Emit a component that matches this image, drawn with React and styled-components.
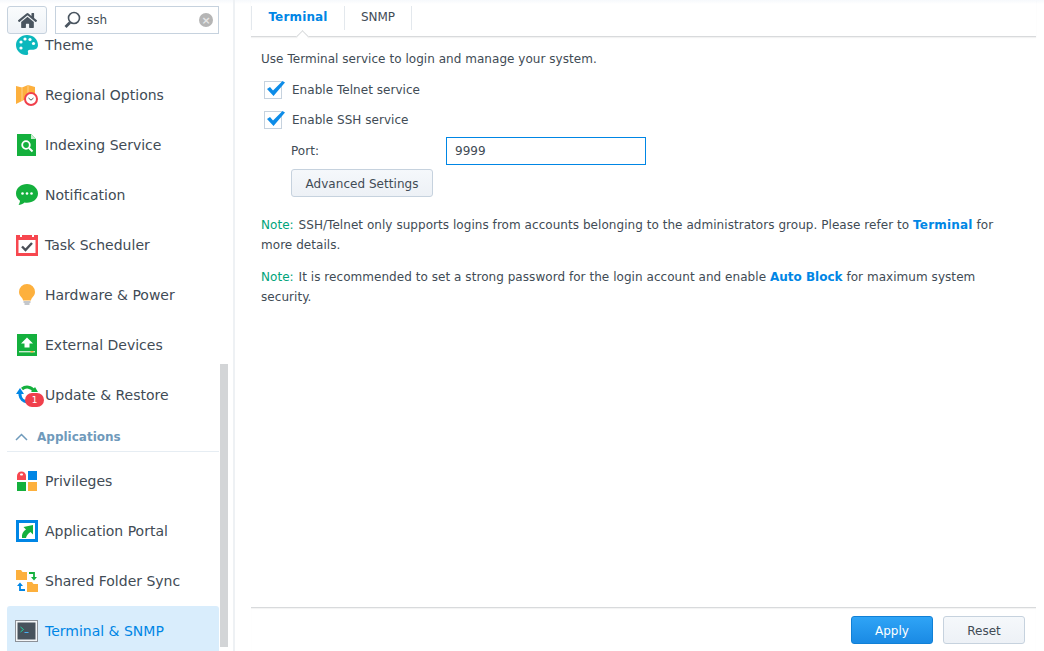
import React from "react";
import styled, { createGlobalStyle } from "styled-components";
import { FaHome } from "react-icons/fa";

const Global = createGlobalStyle`
  html, body {
    margin: 0;
    padding: 0;
    height: 100%;
    overflow: hidden;
    background: #fff;
  }
  body {
    font-family: "DejaVu Sans", Verdana, sans-serif;
    font-size: 12px;
    color: #414b55;
  }
  * { box-sizing: border-box; }
`;

const Page = styled.div`
  display: flex;
  width: 1044px;
  height: 651px;
  background: linear-gradient(#f6f9fc, #fff 4px);
  overflow: hidden;
`;

const Sidebar = styled.aside`
  position: relative;
  width: 235px;
  height: 651px;
  flex: none;
  border-right: 2px solid #eef1f4;
  overflow: hidden;
`;

const Toolbar = styled.div`
  position: absolute;
  top: 0;
  left: 0;
  width: 233px;
  height: 35px;
  padding: 6px 0 0 7px;
  display: flex;
  gap: 8px;
  background: linear-gradient(#f6f9fc, #fff 4px);
  z-index: 2;
`;

const HomeButton = styled.button`
  width: 40px;
  height: 28px;
  padding: 0;
  display: flex;
  align-items: center;
  justify-content: center;
  border: 1px solid #c6d2de;
  border-radius: 3px;
  background: linear-gradient(#fafcfd, #eef2f7);
  color: #4a5560;
  font-size: 19px;
`;

const Search = styled.div`
  width: 164px;
  height: 28px;
  padding: 0 5px 0 8px;
  display: flex;
  align-items: center;
  gap: 6px;
  border: 1px solid #c6d2de;
  background: #fff;
`;

const SearchText = styled.span`
  flex: 1;
  font-size: 12px;
  color: #414b55;
`;

const ClearDot = styled.span`
  width: 14px;
  height: 14px;
  border-radius: 50%;
  background: #b5b5b5;
  color: #e6e6e6;
  display: flex;
  align-items: center;
  justify-content: center;
  font-size: 11px;
  font-weight: bold;
  line-height: 1;
`;

const ScrollThumb = styled.div`
  position: absolute;
  top: 364px;
  left: 220px;
  width: 8px;
  height: 283px;
  background: #d3d5d7;
`;

const List = styled.div`
  padding: 20px 0 0 7px;
  width: 219px;
  display: flex;
  flex-direction: column;
`;

const Row = styled.div`
  height: 50px;
  padding-left: 9px;
  display: flex;
  align-items: center;
  gap: 7px;
  border-radius: 3px;
  font-size: 14px;
  color: ${(p) => (p.$active ? "#0086e5" : "#414b55")};
  background: ${(p) =>
    p.$active ? "linear-gradient(#d9edfc 92%, #eef7fe)" : "transparent"};
`;

const IconSlot = styled.span`
  position: relative;
  width: 22px;
  height: 22px;
  flex: none;
  display: block;
  svg { display: block; }
`;

const Badge = styled.span`
  position: absolute;
  left: 9px;
  top: 9px;
  width: 19px;
  height: 14px;
  border-radius: 7px;
  background: #f0404c;
  color: #fff;
  font-size: 9px;
  line-height: 14px;
  text-align: center;
`;

const Section = styled.div`
  height: 32px;
  margin-bottom: 4px;
  padding: 2px 0 0 8px;
  display: flex;
  align-items: center;
  gap: 9px;
  font-size: 12px;
  font-weight: bold;
  color: #6f9abb;
  border-bottom: 1px solid #e6edf3;
`;

const Main = styled.main`
  flex: 1;
  display: flex;
  flex-direction: column;
  padding: 0 8px 0 16px;
  min-width: 0;
`;

const Tabs = styled.div`
  position: relative;
  height: 37px;
  padding-top: 6px;
  display: flex;
  align-items: flex-start;
  border-bottom: 1px solid #d8dadc;
  box-shadow: 0 1px 1px rgba(0, 0, 0, 0.05);
`;

const Tab = styled.div`
  position: relative;
  height: 24px;
  width: ${(p) => p.$w}px;
  line-height: 23px;
  text-align: center;
  font-size: 12px;
  font-weight: ${(p) => (p.$active ? "bold" : "normal")};
  letter-spacing: ${(p) => (p.$active ? "0.15px" : "0")};
  color: ${(p) => (p.$active ? "#0086e5" : "#414b55")};
  border-left: ${(p) => (p.$first ? "1px solid #e3e8ed" : "none")};
  border-right: 1px solid #e3e8ed;
`;

const TabNotch = styled.span`
  position: absolute;
  left: 47px;
  top: 32px;
  width: 9px;
  height: 9px;
  transform: rotate(45deg);
  background: #fff;
  border-left: 1px solid #d8dadc;
  border-top: 1px solid #d8dadc;
`;

const Content = styled.div`
  flex: 1;
  padding: 13px 0 0 10px;
  font-size: 12px;
  letter-spacing: 0.04px;
`;

const Intro = styled.p`
  margin: 0;
  line-height: 18px;
`;

const CheckRow = styled.label`
  display: flex;
  align-items: center;
  gap: 10px;
  height: 30px;
  padding-left: 3px;
  &:first-of-type { margin-top: 7px; }
`;

const CheckBox = styled.span`
  position: relative;
  width: 18px;
  height: 18px;
  border: 1px solid #c6d2de;
  background: #fff;
  svg {
    position: absolute;
    left: 2px;
    top: -1px;
  }
`;

const PortRow = styled.div`
  display: flex;
  align-items: center;
  margin: 2px 0 0 30px;
  height: 28px;
`;

const PortLabel = styled.span`
  width: 155px;
`;

const PortInput = styled.div`
  width: 200px;
  height: 28px;
  padding-left: 8px;
  line-height: 26px;
  border: 1px solid #0086e5;
`;

const Button = styled.button`
  display: block;
  font-family: inherit;
  font-size: 12px;
  letter-spacing: inherit;
  color: #414b55;
  height: 28px;
  width: ${(p) => p.$w}px;
  padding: 1px 0 0;
  border: 1px solid ${(p) => (p.$primary ? "#1180d6" : "#c6d2de")};
  border-radius: 3px;
  background: ${(p) =>
    p.$primary ? "linear-gradient(#2fa4f6, #1a8ae4)" : "linear-gradient(#f5f8fb, #edf1f6)"};
  ${(p) => p.$primary && "color: #fff;"}
`;

const AdvancedButton = styled(Button)`
  margin: 4px 0 0 30px;
`;

const Note = styled.p`
  margin: ${(p) => p.$top}px 0 0;
  line-height: 20px;
  width: 740px;
  letter-spacing: 0.05px;
`;

const NoteTag = styled.span`
  color: #00a47a;
  margin-right: 1px;
`;

const NoteLink = styled.a`
  color: #0086e5;
  font-weight: bold;
  letter-spacing: ${(p) => p.$spacing}px;
`;

const Footer = styled.div`
  height: 44px;
  padding: 8px 11px 0 0;
  display: flex;
  justify-content: flex-end;
  gap: 10px;
  border-top: 1px solid #d8dadc;
  box-shadow: inset 0 1px 1px rgba(0, 0, 0, 0.05);
`;

const ThemeIcon = () => (
  <svg width="22" height="22" viewBox="0 0 22 22">
    <path d="M11 1C5 1 0 5.500 0 11s4.500 10 10 10c2 0 2.600-1.200 2-2.600-.6-1.500.3-2.700 2-2.700h3.500c2.500 0 4.500-1.700 4.500-4.400C22 5 17 1 11 1z" fill="#0cb8bd" />
    <circle cx="5" cy="8" r="1.600" fill="#fff" />
    <circle cx="9" cy="5" r="1.600" fill="#fff" />
    <circle cx="14" cy="5.500" r="1.600" fill="#fff" />
    <circle cx="17.500" cy="9.500" r="1.600" fill="#fff" />
    <circle cx="5" cy="14" r="1.600" fill="#fff" />
  </svg>
);

const RegionalIcon = () => (
  <svg width="22" height="22" viewBox="0 0 22 22">
    <path d="M0 2l6 1.500L12 1l7 2v10l-7 1-6 3-6 3z" fill="#fdb03d" />
    <path d="M6 3.500V17M12 1v13" stroke="#ffd28a" strokeWidth="1" />
    <circle cx="15" cy="15" r="6" fill="#fff" stroke="#f0404c" strokeWidth="2" />
    <path d="M12.500 14l2.500 2.200 2.500-2.200" fill="none" stroke="#555" strokeWidth="1" />
  </svg>
);

const IndexIcon = () => (
  <svg width="22" height="22" viewBox="0 0 22 22">
    <path d="M1 0h14l5 5v17H1z" fill="#14b03d" />
    <path d="M15 0l5 5h-5z" fill="#c8eccf" />
    <circle cx="10" cy="11" r="3.800" fill="none" stroke="#fff" strokeWidth="1.800" />
    <path d="M13 14l3.500 3.500" stroke="#fff" strokeWidth="2" />
  </svg>
);

const NotificationIcon = () => (
  <svg width="22" height="22" viewBox="0 0 22 22">
    <path d="M11 0C5 0 0 4 0 9.500c0 3 1.500 5.500 4 7.200-.1 1.600-.8 3.300-1.500 4.300 2 0 4.500-1 6-2.500 1 .2 1.700.3 2.500.3 6 0 11-4 11-9.300S17 0 11 0z" fill="#14b03d" />
    <circle cx="6.500" cy="9.500" r="1.300" fill="#fff" />
    <circle cx="11" cy="9.500" r="1.300" fill="#fff" />
    <circle cx="15.500" cy="9.500" r="1.300" fill="#fff" />
  </svg>
);

const TaskIcon = () => (
  <svg width="22" height="22" viewBox="0 0 22 22">
    <rect x="0" y="1" width="22" height="21" fill="#f7474f" />
    <rect x="2.500" y="6" width="17" height="13" fill="#fff" />
    <rect x="4" y="0" width="2" height="3" fill="#fff" />
    <rect x="16" y="0" width="2" height="3" fill="#fff" />
    <path d="M6 12.500l3.500 3.500L16 9" fill="none" stroke="#4a4f57" strokeWidth="2.400" />
  </svg>
);

const BulbIcon = () => (
  <svg width="22" height="22" viewBox="0 0 22 22">
    <path d="M11 0a8 8 0 0 0-8 8c0 3 1.700 4.500 3 6 .8.900 1 2 1 2.500h8c0-.5.2-1.600 1-2.500 1.300-1.500 3-3 3-6a8 8 0 0 0-8-8z" fill="#fdb03d" />
    <path d="M7.500 18h7M8.500 20h5" stroke="#8a9097" strokeWidth="1.200" />
  </svg>
);

const ExternalIcon = () => (
  <svg width="22" height="22" viewBox="0 0 22 22">
    <rect x="1" y="0" width="20" height="22" fill="#14b03d" />
    <path d="M11 3.500l6 6h-3.500v4h-5v-4H5z" fill="#fff" />
    <rect x="3" y="17" width="16" height="1.400" fill="#c8eccf" />
    <rect x="14.500" y="17" width="3" height="1.400" fill="#fdb03d" />
  </svg>
);

const UpdateIcon = () => (
  <svg width="22" height="22" viewBox="0 0 22 22">
    <path d="M6 5a8 8 0 0 1 12 2" fill="none" stroke="#14b03d" strokeWidth="3" />
    <path d="M15 8h7l-3-5z" fill="#14b03d" />
    <path d="M4 9v2a8 8 0 0 0 7 7" fill="none" stroke="#0086e5" strokeWidth="3" />
    <path d="M0 10h8L4 4z" fill="#0086e5" />
  </svg>
);

const PrivilegesIcon = () => (
  <svg width="22" height="22" viewBox="0 0 22 22">
    <path d="M1 10V6a4.500 4.500 0 0 1 9 0v4z" fill="#f7474f" />
    <rect x="4" y="3.500" width="3" height="2" rx="1" fill="#fff" />
    <rect x="12" y="1" width="9" height="9" fill="#0086e5" />
    <rect x="1" y="12" width="9" height="9" fill="#14b03d" />
    <rect x="12" y="12" width="9" height="9" fill="#fdb03d" />
  </svg>
);

const PortalIcon = () => (
  <svg width="22" height="22" viewBox="0 0 22 22">
    <rect x="0" y="0" width="22" height="22" fill="#0086e5" />
    <rect x="3" y="3" width="16" height="16" fill="#fff" />
    <path d="M6 18c-.5-4 1-6.500 4-8.500L7.500 7l9.500-2v9.500l-2.500-2.500c-2.500 1.500-4 3.500-4.500 6z" fill="#14b03d" />
  </svg>
);

const SyncIcon = () => (
  <svg width="22" height="22" viewBox="0 0 22 22">
    <path d="M0 0h5l1.500 2H11v8H0z" fill="#fdb03d" />
    <path d="M11 12h5l1.500 2H22v8H11z" fill="#fdb03d" />
    <path d="M13 3h5v4" fill="none" stroke="#14b03d" strokeWidth="1.800" />
    <path d="M15 7h6l-3 3.500z" fill="#14b03d" />
    <path d="M9 20H4v-4" fill="none" stroke="#0086e5" strokeWidth="1.800" />
    <path d="M1 16h6l-3-3.500z" fill="#0086e5" />
  </svg>
);

const TerminalIcon = () => (
  <svg width="23" height="22" viewBox="0 0 23 22" style={{ marginLeft: -1 }}>
    <rect x=".5" y=".5" width="22" height="21" fill="#f4f6f8" stroke="#8c9198" />
    <rect x="2.500" y="2.500" width="18" height="17" fill="#47525c" />
    <path d="M5.500 7l3 2.500-3 2.500" fill="none" stroke="#1fd0a0" strokeWidth="1" />
    <path d="M9.500 12.500h4" stroke="#4ab0f0" strokeWidth="1" />
  </svg>
);

const Magnifier = () => (
  <svg width="17" height="18" viewBox="0 0 17 18">
    <circle cx="10" cy="7" r="5.500" fill="none" stroke="#4a5560" strokeWidth="1.600" />
    <path d="M6 11.500l-4.500 4.500" stroke="#4a5560" strokeWidth="2.800" />
  </svg>
);

const Tick = () => (
  <svg width="18" height="15" viewBox="0 0 18 15">
    <path d="M0 8l3-2 3 3.500L15.500 0 18 1.500 6.500 15z" fill="#0d8ce8" />
  </svg>
);

const Chevron = () => (
  <svg width="13" height="8" viewBox="0 0 13 8">
    <path d="M1 7l5.500-5.500L12 7" fill="none" stroke="#6f9abb" strokeWidth="1.500" />
  </svg>
);

const systemItems = [
  ["Theme", ThemeIcon],
  ["Regional Options", RegionalIcon],
  ["Indexing Service", IndexIcon],
  ["Notification", NotificationIcon],
  ["Task Scheduler", TaskIcon],
  ["Hardware & Power", BulbIcon],
  ["External Devices", ExternalIcon],
  ["Update & Restore", UpdateIcon, 1],
];

const appItems = [
  ["Privileges", PrivilegesIcon],
  ["Application Portal", PortalIcon],
  ["Shared Folder Sync", SyncIcon],
  ["Terminal & SNMP", TerminalIcon],
];

const MenuRow = ({ label, Icon, badge, active }) => (
  <Row $active={active}>
    <IconSlot>
      <Icon />
      {badge && <Badge>{badge}</Badge>}
    </IconSlot>
    {label}
  </Row>
);

export default function App() {
  return (
    <Page>
      <Global />
      <Sidebar>
        <Toolbar>
          <HomeButton>
            <FaHome />
          </HomeButton>
          <Search>
            <Magnifier />
            <SearchText>ssh</SearchText>
            <ClearDot>×</ClearDot>
          </Search>
        </Toolbar>
        <List>
          {systemItems.map(([label, Icon, badge]) => (
            <MenuRow key={label} label={label} Icon={Icon} badge={badge} />
          ))}
          <Section>
            <Chevron />
            Applications
          </Section>
          {appItems.map(([label, Icon], i) => (
            <MenuRow key={label} label={label} Icon={Icon} active={i === 3} />
          ))}
        </List>
        <ScrollThumb />
      </Sidebar>
      <Main>
        <Tabs>
          <Tab $first $active $w={94}>
            Terminal
          </Tab>
          <Tab $w={67}>SNMP</Tab>
          <TabNotch />
        </Tabs>
        <Content>
          <Intro>Use Terminal service to login and manage your system.</Intro>
          <CheckRow>
            <CheckBox>
              <Tick />
            </CheckBox>
            Enable Telnet service
          </CheckRow>
          <CheckRow>
            <CheckBox>
              <Tick />
            </CheckBox>
            Enable SSH service
          </CheckRow>
          <PortRow>
            <PortLabel>Port:</PortLabel>
            <PortInput>9999</PortInput>
          </PortRow>
          <AdvancedButton $w={142}>Advanced Settings</AdvancedButton>
          <Note $top={18}>
            <NoteTag>Note:</NoteTag> SSH/Telnet only supports logins from accounts belonging to the
            administrators group. Please refer to <NoteLink $spacing={0.2}>Terminal</NoteLink> for more details.
          </Note>
          <Note $top={12}>
            <NoteTag>Note:</NoteTag> It is recommended to set a strong password for the login
            account and enable <NoteLink $spacing={0}>Auto Block</NoteLink> for maximum system security.
          </Note>
        </Content>
        <Footer>
          <Button $primary $w={82}>
            Apply
          </Button>
          <Button $w={82}>Reset</Button>
        </Footer>
      </Main>
    </Page>
  );
}
